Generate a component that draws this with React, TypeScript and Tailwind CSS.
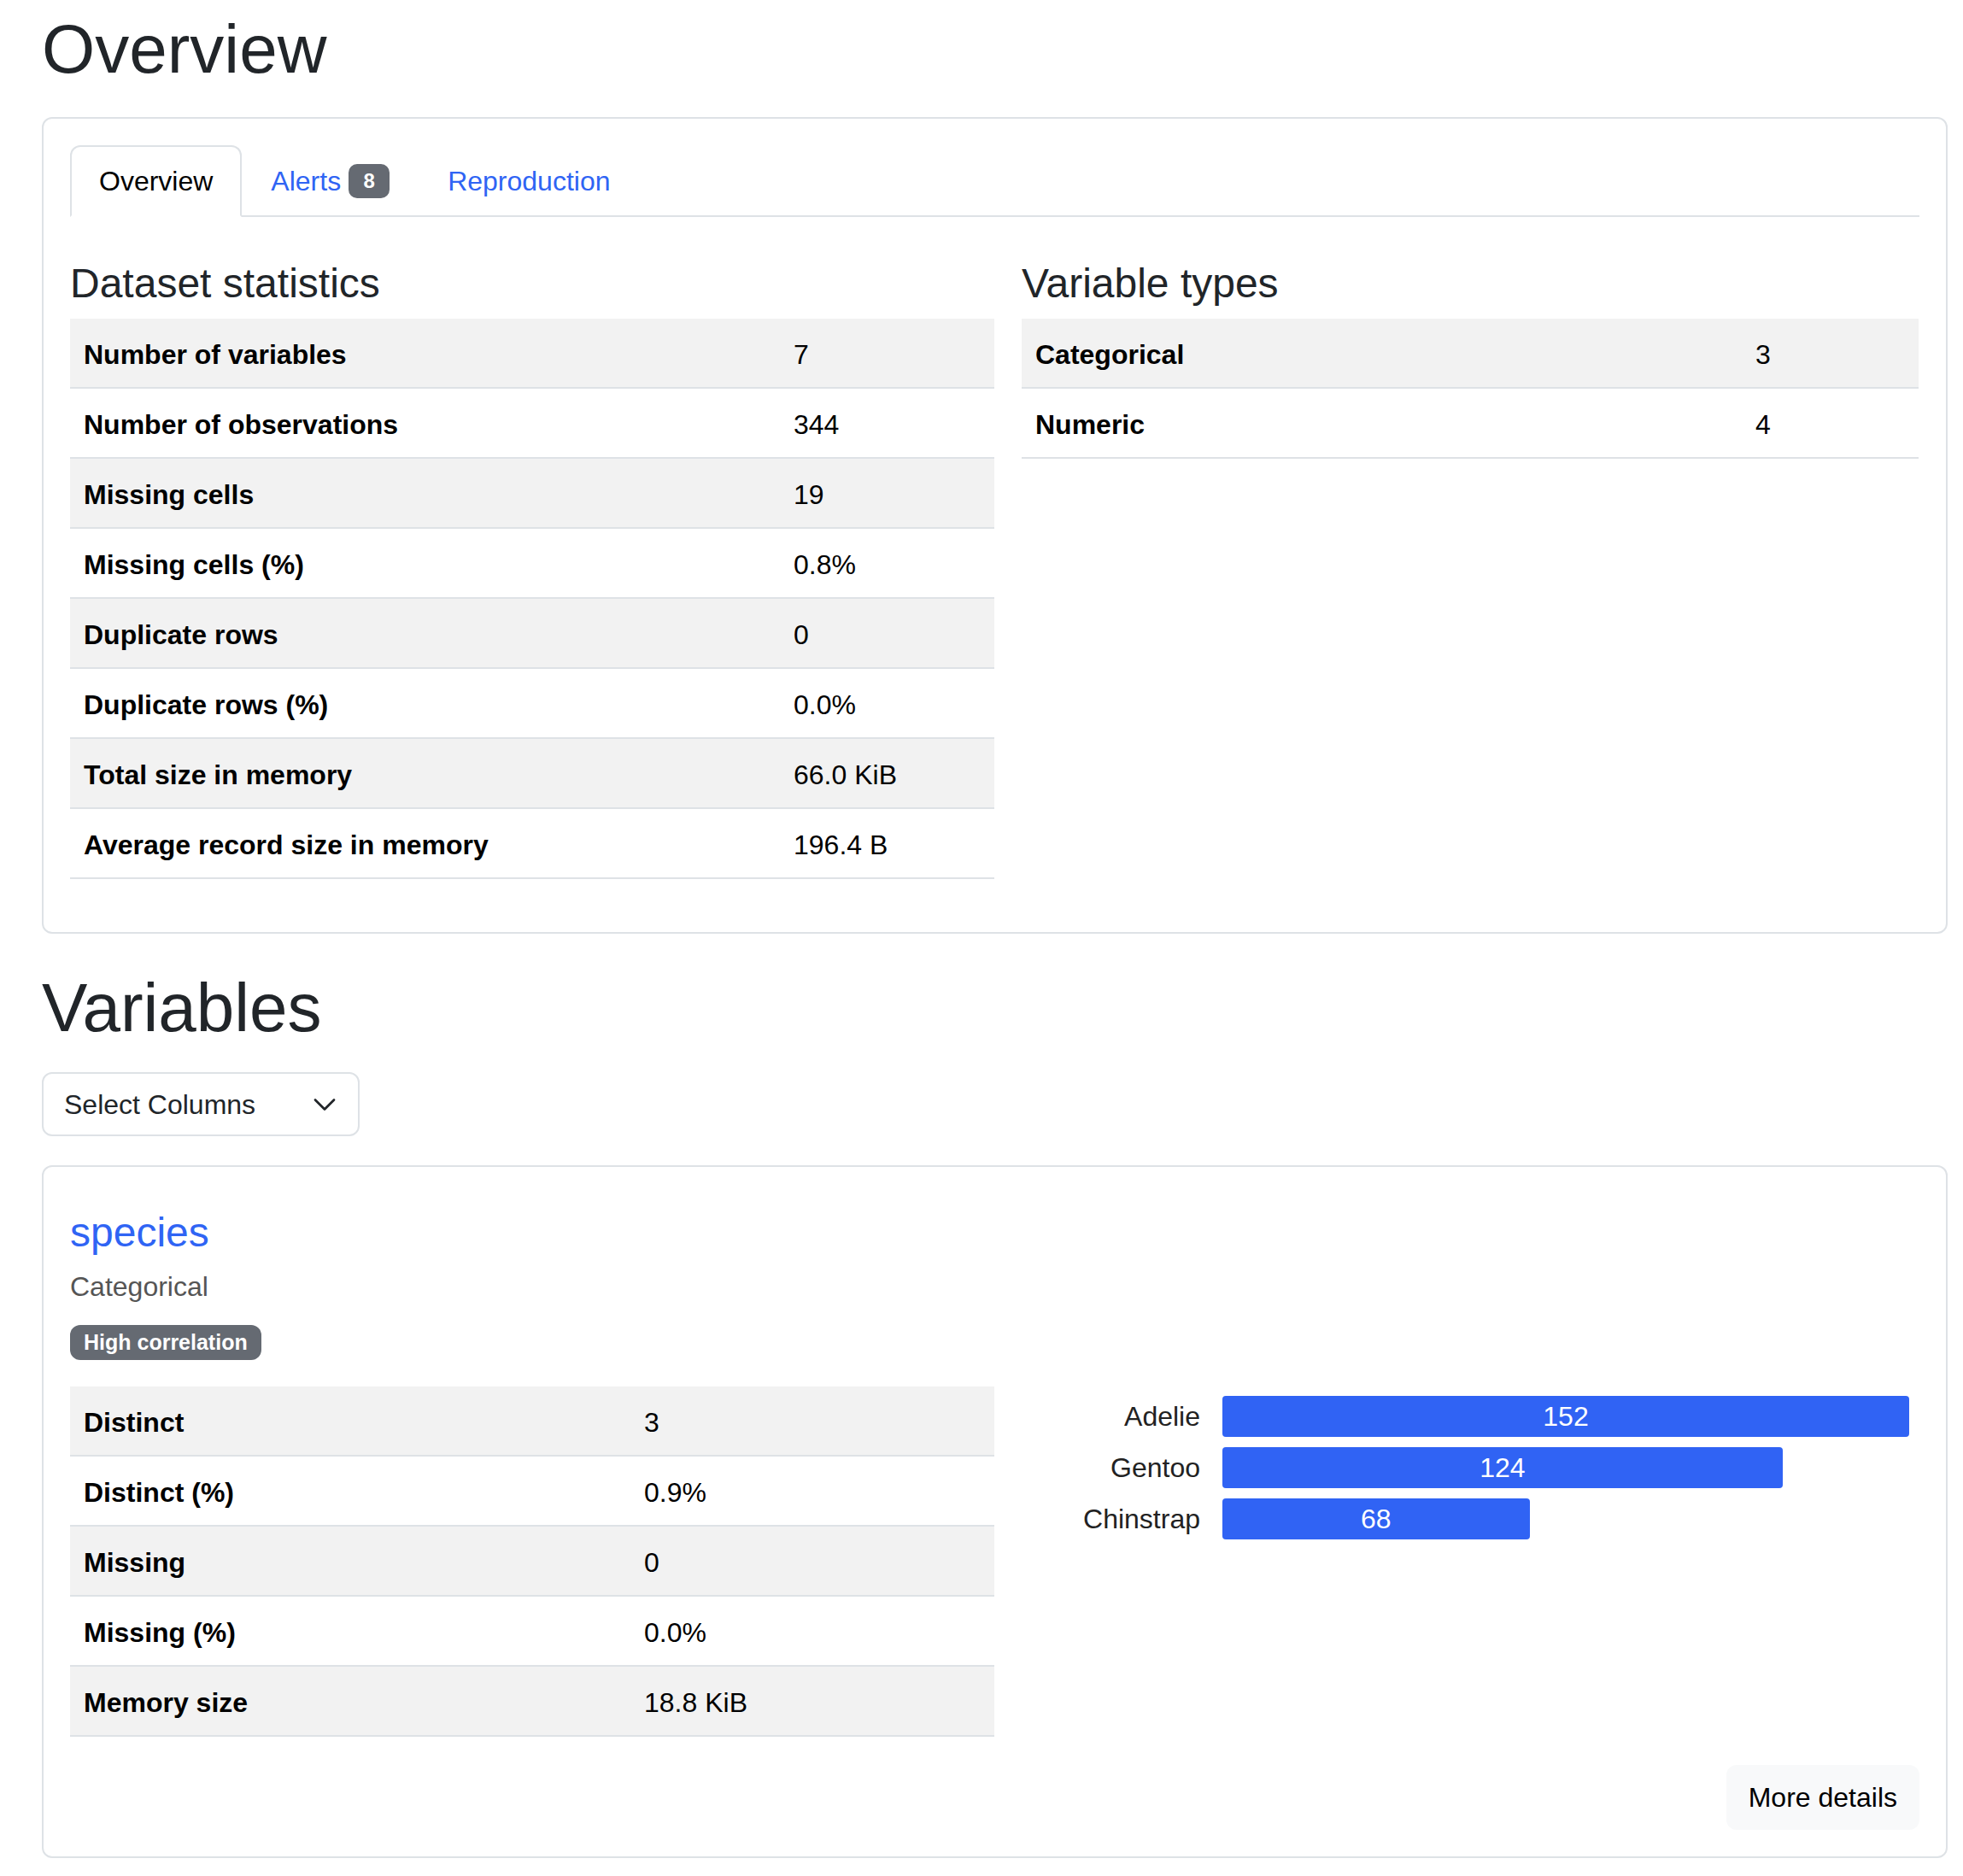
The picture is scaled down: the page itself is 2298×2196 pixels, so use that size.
import { ChevronDown } from 'lucide-react';

const datasetStats: [string, string][] = [
  ['Number of variables', '7'],
  ['Number of observations', '344'],
  ['Missing cells', '19'],
  ['Missing cells (%)', '0.8%'],
  ['Duplicate rows', '0'],
  ['Duplicate rows (%)', '0.0%'],
  ['Total size in memory', '66.0 KiB'],
  ['Average record size in memory', '196.4 B'],
];

const variableTypes: [string, string][] = [
  ['Categorical', '3'],
  ['Numeric', '4'],
];

const speciesStats: [string, string][] = [
  ['Distinct', '3'],
  ['Distinct (%)', '0.9%'],
  ['Missing', '0'],
  ['Missing (%)', '0.0%'],
  ['Memory size', '18.8 KiB'],
];

const speciesCounts = [
  { name: 'Adelie', count: 152 },
  { name: 'Gentoo', count: 124 },
  { name: 'Chinstrap', count: 68 },
];

function StatTable({ rows, labelWidth }: { rows: [string, string][]; labelWidth: string }) {
  return (
    <div className="text-black">
      {rows.map(([label, value], i) => (
        <div
          key={label}
          className={`flex border-b-2 border-[#dee2e6] ${i % 2 === 0 ? 'bg-[#f2f2f2]' : 'bg-white'}`}
        >
          <div className={`${labelWidth} shrink-0 px-4 pt-[18px] pb-[14px] font-bold leading-[48px]`}>{label}</div>
          <div className="px-4 pt-[18px] pb-[14px] leading-[48px]">{value}</div>
        </div>
      ))}
    </div>
  );
}

function Tabs() {
  return (
    <div className="flex border-b-2 border-[#dee2e6]">
      <div className="-mb-[2px] rounded-t-[12px] border-2 border-[#dee2e6] border-b-white bg-white px-8 py-4 leading-[48px] text-black">
        Overview
      </div>
      <div className="-mb-[2px] flex items-center border-2 border-transparent px-8 py-4 leading-[48px] text-[#2f64f4]">
        Alerts
        <span className="ml-[9px] flex h-[40px] w-[48px] items-center justify-center rounded-[10px] bg-[#656a72] text-[24px] font-bold leading-none text-white">
          8
        </span>
      </div>
      <div className="-mb-[2px] border-2 border-transparent px-8 py-4 leading-[48px] text-[#2f64f4]">
        Reproduction
      </div>
    </div>
  );
}

function BarChart() {
  const max = 152;
  return (
    <div className="flex flex-col gap-[12px] pt-[11px]">
      {speciesCounts.map((s) => (
        <div key={s.name} className="flex items-center gap-[26px]">
          <div className="w-[209px] text-right leading-[48px] text-[#222]">{s.name}</div>
          <div className="w-[804px]">
            <div
              className="flex h-[48px] items-center justify-center rounded-[4px] bg-[#3063f4] text-white"
              style={{ width: `${(s.count / max) * 804}px` }}
            >
              {s.count}
            </div>
          </div>
        </div>
      ))}
    </div>
  );
}

export default function App() {
  return (
    <div className="min-h-screen bg-white font-['Liberation_Sans',Arial,sans-serif] text-[32px] text-[#212529]">
      <div className="ml-[49px] w-[2231px] pt-[10px] pb-[24px]">
        <h1 className="text-[80px] font-medium leading-[96px]">Overview</h1>

        <section className="mt-[31px] rounded-[12px] border-2 border-[#dee2e6] p-[31px] pb-0">
          <Tabs />
          <div className="mt-[49px] grid grid-cols-[1082px_1050px] gap-x-[32px]">
            <div>
              <h4 className="mb-[12px] text-[48px] font-medium leading-[58px]">Dataset statistics</h4>
              <StatTable rows={datasetStats} labelWidth="w-[831px]" />
            </div>
            <div>
              <h4 className="mb-[12px] text-[48px] font-medium leading-[58px]">Variable types</h4>
              <StatTable rows={variableTypes} labelWidth="w-[843px]" />
            </div>
          </div>
          <div className="h-[62px]" />
        </section>

        <h1 className="mt-[39px] text-[80px] font-medium leading-[96px]">Variables</h1>

        <div className="mt-[27px] flex h-[75px] w-[372px] items-center justify-between rounded-[12px] border-2 border-[#dee2e6] pl-[24px] pr-[17px]">
          <span className="leading-[48px]">Select Columns</span>
          <ChevronDown size={44} strokeWidth={1.5} />
        </div>

        <section className="mt-[34px] rounded-[12px] border-2 border-[#dee2e6] p-[31px]">
          <div className="mt-[17px] text-[48px] font-medium leading-[58px] text-[#2f64f4]">species</div>
          <div className="mt-[10px] leading-[48px] text-[#555]">Categorical</div>
          <div className="mt-[21px] flex">
            <span className="flex h-[41px] items-center rounded-[12px] bg-[#656a72] px-[16px] text-[25px] font-bold text-white">
              High correlation
            </span>
          </div>
          <div className="mt-[31px] grid grid-cols-[1082px_1050px] gap-x-[32px]">
            <StatTable rows={speciesStats} labelWidth="w-[656px]" />
            <BarChart />
          </div>
          <div className="mt-[33px] flex justify-end">
            <button className="flex h-[76px] items-center rounded-[12px] bg-[#f8f9fa] px-[26px] text-black">
              More details
            </button>
          </div>
        </section>
      </div>
    </div>
  );
}
